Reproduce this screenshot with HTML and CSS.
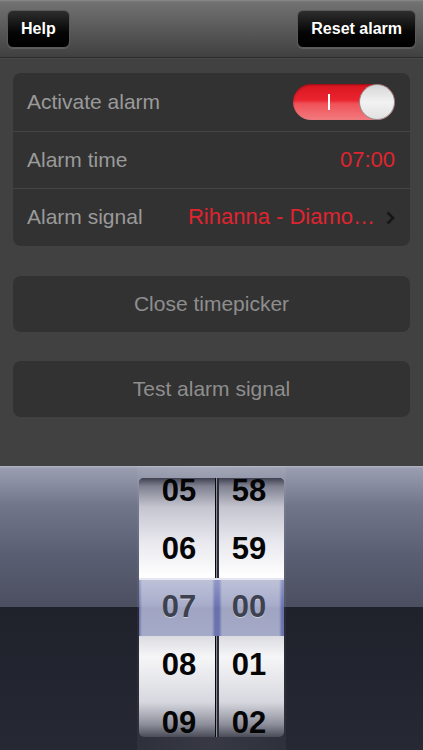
FILE: index.html
```html
<!DOCTYPE html>
<html>
<head>
	<title>Alarm</title>
	<meta charset="utf-8">
	<meta name="viewport" content="width=device-width, initial-scale=1">
	<link rel="stylesheet" href="styles.css">
</head>
<body>

	<header class="topbar">
		<button class="bar-btn">Help</button>
		<button class="bar-btn">Reset alarm</button>
	</header>

	<main class="content">

		<div class="group">
			<div class="row">
				<span class="label">Activate alarm</span>
				<span class="toggle"><span class="toggle-on"></span><span class="toggle-knob"></span></span>
			</div>
			<div class="row">
				<span class="label">Alarm time</span>
				<span class="value">07:00</span>
			</div>
			<div class="row">
				<span class="label">Alarm signal</span>
				<span class="value value-signal">Rihanna - Diamo…</span>
				<svg class="chevron" width="9" height="14" viewBox="0 0 9 14"><path d="M1.5 1.5 L7 7 L1.5 12.5" fill="none" stroke="#161616" stroke-width="2.6"/></svg>
			</div>
		</div>

		<button class="wide-btn">Close timepicker</button>
		<button class="wide-btn">Test alarm signal</button>

	</main>

	<section class="picker">
		<div class="track">
			<div class="wheel">
				<div class="col col-hours">
					<span>05</span><span>06</span><span class="sel">07</span><span>08</span><span>09</span>
				</div>
				<div class="col col-minutes">
					<span>58</span><span>59</span><span class="sel">00</span><span>01</span><span>02</span>
				</div>
				<div class="band"></div>
			</div>
		</div>
	</section>

</body>
</html>
```

FILE: styles.css
```css
*,
*:before,
*:after {
	box-sizing: border-box;
}

body {
	margin: 0;
	background-color: #414141;
	font-family: "Liberation Sans", Arial, sans-serif;
	height: 750px;
	overflow: hidden;
}

button {
	font-family: inherit;
	cursor: pointer;
}

/* top bar */

.topbar {
	height: 58px;
	display: flex;
	justify-content: space-between;
	align-items: flex-start;
	padding: 10px 7px 0;
	background: linear-gradient(to bottom, #8a8a8a 0, #727272 2px, #585858 30px, #414141 56px);
	border-bottom: 1px solid #2a2a2a;
	box-shadow: 0 1px 0 #4a4a4a;
}

.bar-btn {
	height: 38px;
	padding: 0 13px;
	border: 1px solid #5a5a5a;
	border-radius: 6px;
	background: linear-gradient(to bottom, #2e2e2e, #050505 60%, #000000);
	color: #ffffff;
	font-size: 16px;
	font-weight: bold;
	box-shadow: 0 1px 0 rgba(255, 255, 255, 0.12);
}

/* content */

.content {
	height: 408px;
	padding: 15px 13px 0;
}

.group {
	background-color: #323232;
	border-radius: 8px;
}

.row {
	height: 57.5px;
	display: flex;
	align-items: center;
	padding: 0 15px 0 14px;
	border-top: 1px solid #444444;
}

.row:first-child {
	border-top: 0;
}

.label {
	flex: 1;
	color: #9a9a9a;
	font-size: 21px;
}

.value {
	color: #e0242f;
	font-size: 22px;
}

.value-signal {
	margin-right: 11px;
}

.chevron {
	display: block;
	margin-top: 1px;
}

.toggle {
	position: relative;
	width: 102px;
	height: 36px;
	border-radius: 18px;
	background: linear-gradient(to bottom, #d8141f 0, #ea2530 45%, #f05258 55%, #f27b7f 100%);
	box-shadow: inset 0 1px 2px rgba(0, 0, 0, 0.35);
}

.toggle-on {
	position: absolute;
	left: 35px;
	top: 10px;
	width: 2px;
	height: 16px;
	background-color: #ffffff;
}

.toggle-knob {
	position: absolute;
	right: 0;
	top: 0;
	width: 36px;
	height: 36px;
	border-radius: 50%;
	border: 1px solid #8d8d8d;
	background: linear-gradient(to bottom, #d6d6d6, #f2f2f2 50%, #e1e1e1);
}

.wide-btn {
	display: block;
	width: 100%;
	height: 56px;
	margin-top: 30px;
	border: 0;
	border-radius: 8px;
	background-color: #323232;
	color: #8e8e8e;
	font-size: 21px;
}

.wide-btn + .wide-btn {
	margin-top: 29px;
}

/* time picker */

.picker {
	height: 284px;
	display: flex;
	justify-content: center;
	background: linear-gradient(to bottom, #b4b8c6 0, #9a9eb0 2px, #70758a 40px, #5a5e72 90px, #4b4f60 141px, #1f212b 141px, #262834 284px);
}

.track {
	width: 149px;
	padding-top: 12px;
	background: linear-gradient(to right, rgba(255, 255, 255, 0.04), rgba(255, 255, 255, 0.08) 50%, rgba(255, 255, 255, 0.04));
}

.wheel {
	position: relative;
	height: 259px;
	margin: 0 2px;
	display: flex;
	overflow: hidden;
	border-radius: 5px;
	background-color: #2a2c36;
}

.col {
	display: flex;
	flex-direction: column;
	margin-top: -16px;
	background: linear-gradient(to bottom, #3e4050 16px, #7e8090 24px, #c4c5cf 45px, #e8e8ee 80px, #ffffff 115px, #c9cad3 160px, #f6f6f8 195px, #d7d8df 240px, #8e909c 262px, #4a4c58 275px);
}

.col-hours {
	width: 76px;
	margin-right: 4px;
	padding-left: 4px;
	box-shadow: 1px 0 0 #0a0a0a, 2px 0 0 #8a8c9a;
}

.col-minutes {
	flex: 1;
	padding-right: 5px;
}

.col span {
	flex-shrink: 0;
	position: relative;
	z-index: 2;
	height: 58px;
	display: flex;
	align-items: center;
	justify-content: center;
	color: #050505;
	font-size: 31px;
	font-weight: bold;
}

.col span.sel {
	color: #3e414f;
	text-shadow: 0 1px 0 rgba(255, 255, 255, 0.45);
}

.band {
	position: absolute;
	z-index: 1;
	left: 0;
	right: 0;
	top: 100px;
	height: 58px;
	border-top: 2px solid #e4e6f0;
	background: linear-gradient(to right, #6e76b4 0, #a8adcb 3px, #a8adcb 73px, #6e76b4 76px, #6e76b4 80px, #a8adcb 83px, #a8adcb 140px, #6e76b4 143px);
}

.band:after {
	content: "";
	position: absolute;
	left: 0;
	right: 0;
	top: 0;
	bottom: 0;
	background: linear-gradient(to bottom, rgba(255, 255, 255, 0.25), rgba(255, 255, 255, 0) 45%, rgba(0, 0, 20, 0.05) 50%, rgba(0, 0, 20, 0.02));
}
```
